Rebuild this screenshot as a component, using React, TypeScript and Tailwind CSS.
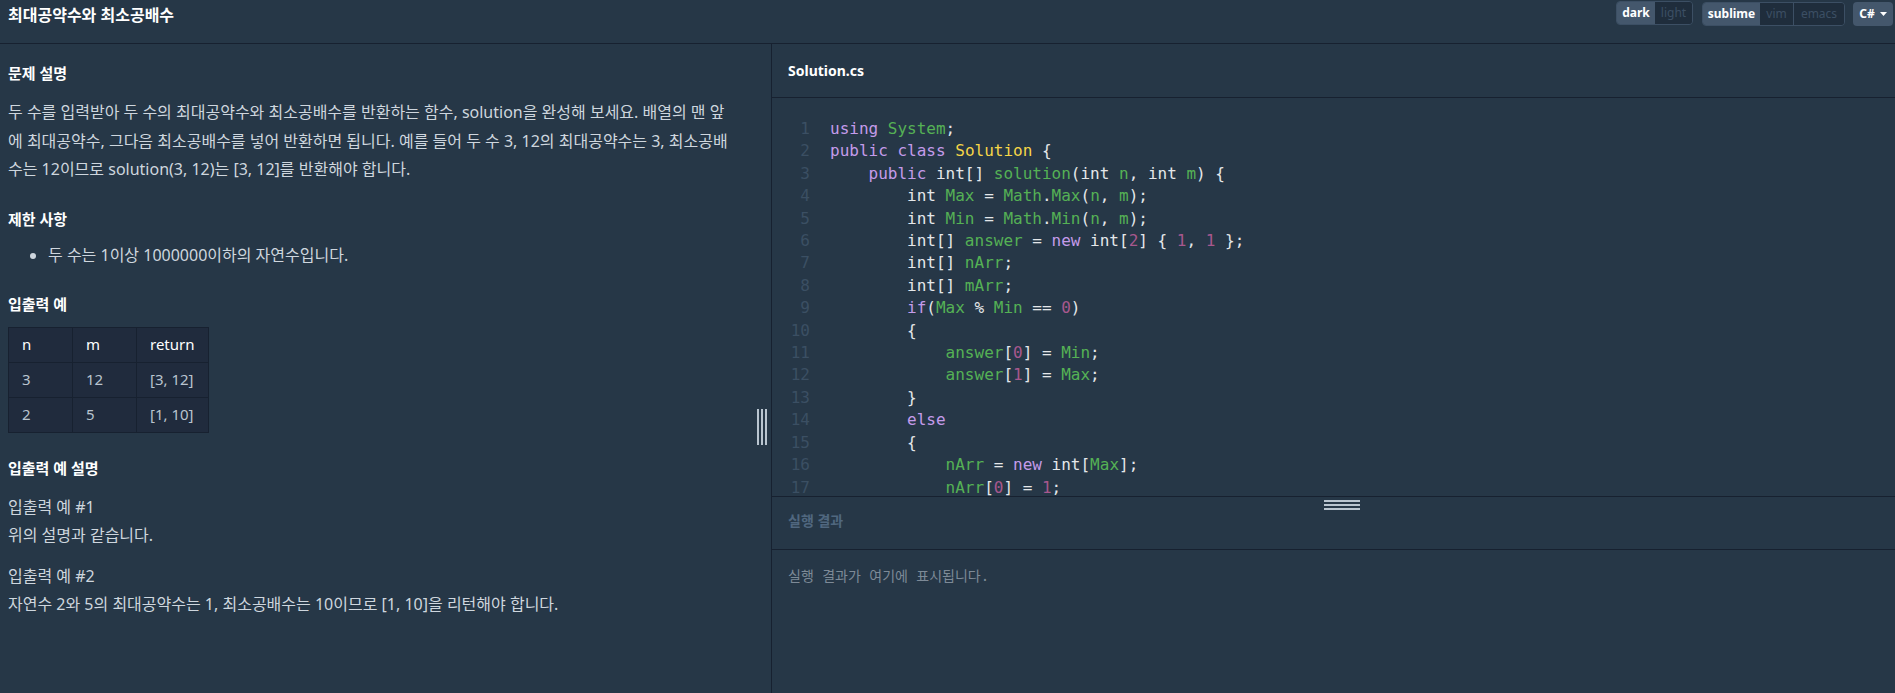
import React from "react";

type Tok = [string, string];
const K = "text-[#c49bea]";
const W = "text-[#e4e7ea]";
const G = "text-[#55b155]";
const Y = "text-[#f5d547]";
const N = "text-[#a8588e]";

const lines: Tok[][] = [
  [[K, "using"], [W, " "], [G, "System"], [W, ";"]],
  [[K, "public"], [W, " "], [K, "class"], [W, " "], [Y, "Solution"], [W, " {"]],
  [[W, "    "], [K, "public"], [W, " int[] "], [G, "solution"], [W, "(int "], [G, "n"], [W, ", int "], [G, "m"], [W, ") {"]],
  [[W, "        int "], [G, "Max"], [W, " = "], [G, "Math"], [W, "."], [G, "Max"], [W, "("], [G, "n"], [W, ", "], [G, "m"], [W, ");"]],
  [[W, "        int "], [G, "Min"], [W, " = "], [G, "Math"], [W, "."], [G, "Min"], [W, "("], [G, "n"], [W, ", "], [G, "m"], [W, ");"]],
  [[W, "        int[] "], [G, "answer"], [W, " = "], [K, "new"], [W, " int["], [N, "2"], [W, "] { "], [N, "1"], [W, ", "], [N, "1"], [W, " };"]],
  [[W, "        int[] "], [G, "nArr"], [W, ";"]],
  [[W, "        int[] "], [G, "mArr"], [W, ";"]],
  [[W, "        "], [K, "if"], [W, "("], [G, "Max"], [W, " % "], [G, "Min"], [W, " == "], [N, "0"], [W, ")"]],
  [[W, "        {"]],
  [[W, "            "], [G, "answer"], [W, "["], [N, "0"], [W, "] = "], [G, "Min"], [W, ";"]],
  [[W, "            "], [G, "answer"], [W, "["], [N, "1"], [W, "] = "], [G, "Max"], [W, ";"]],
  [[W, "        }"]],
  [[W, "        "], [K, "else"]],
  [[W, "        {"]],
  [[W, "            "], [G, "nArr"], [W, " = "], [K, "new"], [W, " int["], [G, "Max"], [W, "];"]],
  [[W, "            "], [G, "nArr"], [W, "["], [N, "0"], [W, "] = "], [N, "1"], [W, ";"]],
];

const sans = "font-['Noto_Sans','Noto_Sans_CJK_KR',sans-serif]";

export default function App() {
  return (
    <div className={`w-[1895px] h-[693px] bg-[#263747] overflow-hidden flex flex-col ${sans}`}>
      {/* header */}
      <div className="h-[44px] shrink-0 border-b border-[#172130] flex items-start justify-between">
        <div className="pl-[8px] pt-[3px] text-[16px] leading-[24px] font-bold text-white">최대공약수와 최소공배수</div>
        <div className="flex items-start pt-[1px] pr-[2px]">
          <div className="flex h-[24px] rounded-[4px] border border-[#3c4f64] overflow-hidden text-[12px] font-bold">
            <div className="w-[38px] bg-[#44576c] text-white flex items-center justify-center">dark</div>
            <div className="w-[37px] bg-[#1f2d3c] text-[#3c4f64] flex items-center justify-center font-normal">light</div>
          </div>
          <div className="ml-[9px] mt-[1px] flex h-[24px] rounded-[4px] border border-[#3c4f64] overflow-hidden text-[12px] font-bold">
            <div className="w-[57px] bg-[#44576c] text-white flex items-center justify-center">sublime</div>
            <div className="w-[34px] bg-[#1f2d3c] text-[#3c4f64] flex items-center justify-center font-normal border-r border-[#3c4f64]">vim</div>
            <div className="w-[50px] bg-[#1f2d3c] text-[#3c4f64] flex items-center justify-center font-normal">emacs</div>
          </div>
          <div className="ml-[8px] mt-[1px] h-[24px] w-[40px] rounded-[4px] bg-[#44576c] text-white text-[12px] font-bold flex items-center justify-center gap-[5px]">
            <span>C#</span>
            <svg width="7" height="4" viewBox="0 0 7 4"><path d="M0 0 L7 0 L3.5 4 Z" fill="#ffffff" /></svg>
          </div>
        </div>
      </div>

      <div className="flex flex-1 min-h-0">
        {/* left panel */}
        <div className="relative w-[772px] shrink-0 border-r border-[#172130] px-[8px] pt-[18px]">
          <div className="text-[15px] leading-[22px] font-bold text-white">문제 설명</div>
          <p className="mt-[14px] max-w-[722px] text-[16px] leading-[28.7px] text-[#ced6de]">
            두 수를 입력받아 두 수의 최대공약수와 최소공배수를 반환하는 함수, solution을 완성해 보세요. 배열의 맨 앞에 최대공약수, 그다음 최소공배수를 넣어 반환하면 됩니다. 예를 들어 두 수 3, 12의 최대공약수는 3, 최소공배수는 12이므로 solution(3, 12)는 [3, 12]를 반환해야 합니다.
          </p>
          <div className="mt-[24px] text-[15px] leading-[22px] font-bold text-white">제한 사항</div>
          <ul className="mt-[11px] pl-[40px] list-disc text-[16px] leading-[28.5px] text-[#ced6de] marker:text-[#ced6de]">
            <li>두 수는 1이상 1000000이하의 자연수입니다.</li>
          </ul>
          <div className="mt-[23px] text-[15px] leading-[22px] font-bold text-white">입출력 예</div>
          <table className="mt-[12px] border-collapse bg-[#202b3d] text-[15px]">
            <thead>
              <tr className="h-[35px] text-white">
                <th className="w-[64px] border border-[#172130] text-left font-normal pl-[13px]">n</th>
                <th className="w-[64px] border border-[#172130] text-left font-normal pl-[13px]">m</th>
                <th className="w-[72px] border border-[#172130] text-left font-normal pl-[13px]">return</th>
              </tr>
            </thead>
            <tbody className="text-[#b9c4cf]">
              <tr className="h-[35px]">
                <td className="border border-[#172130] pl-[13px]">3</td>
                <td className="border border-[#172130] pl-[13px]">12</td>
                <td className="border border-[#172130] pl-[13px]">[3, 12]</td>
              </tr>
              <tr className="h-[35px]">
                <td className="border border-[#172130] pl-[13px]">2</td>
                <td className="border border-[#172130] pl-[13px]">5</td>
                <td className="border border-[#172130] pl-[13px]">[1, 10]</td>
              </tr>
            </tbody>
          </table>
          <div className="mt-[24px] text-[15px] leading-[22px] font-bold text-white">입출력 예 설명</div>
          <div className="mt-[14px] text-[16px] leading-[28px] text-[#ced6de]">
            <p>입출력 예 #1</p>
            <p>위의 설명과 같습니다.</p>
            <p className="mt-[13px]">입출력 예 #2</p>
            <p>자연수 2와 5의 최대공약수는 1, 최소공배수는 10이므로 [1, 10]을 리턴해야 합니다.</p>
          </div>
          {/* vertical resize handle */}
          <div className="absolute right-[4px] top-[365px] flex gap-[2px]">
            <div className="w-[2px] h-[36px] bg-[#b9c5d0]" />
            <div className="w-[2px] h-[36px] bg-[#b9c5d0]" />
            <div className="w-[2px] h-[36px] bg-[#b9c5d0]" />
          </div>
        </div>

        {/* right panel */}
        <div className="flex-1 flex flex-col min-w-0">
          <div className="h-[54px] shrink-0 border-b border-[#172130] flex items-center pl-[16px] text-[14px] font-bold text-white">Solution.cs</div>
          <div className="h-[398px] shrink-0 overflow-hidden pt-[20px] font-['DejaVu_Sans_Mono',monospace] text-[16px] leading-[22.4px]">
            {lines.map((toks, i) => (
              <div key={i} className="flex whitespace-pre">
                <div className="w-[38px] shrink-0 text-right text-[#3b4f63]">{i + 1}</div>
                <div className="pl-[20px]">
                  {toks.map((t, j) => (
                    <span key={j} className={t[0]}>{t[1]}</span>
                  ))}
                </div>
              </div>
            ))}
          </div>
          <div className="relative h-[54px] shrink-0 border-t border-b border-[#172130] flex items-start pl-[16px] pt-[14px] text-[14px] leading-[20px] font-bold text-[#50677f]">
            <span>실행 결과</span>
            <div className="absolute left-[552px] top-[3px] flex flex-col gap-[2px]">
              <div className="w-[36px] h-[2px] bg-[#b9c5d0]" />
              <div className="w-[36px] h-[2px] bg-[#b9c5d0]" />
              <div className="w-[36px] h-[2px] bg-[#b9c5d0]" />
            </div>
          </div>
          <div className="pl-[16px] pt-[16px] font-['DejaVu_Sans_Mono','Noto_Sans_CJK_KR',monospace] text-[14px] leading-[20px] text-[#7d8a97] whitespace-pre">실행 결과가 여기에 표시됩니다.</div>
        </div>
      </div>
    </div>
  );
}
